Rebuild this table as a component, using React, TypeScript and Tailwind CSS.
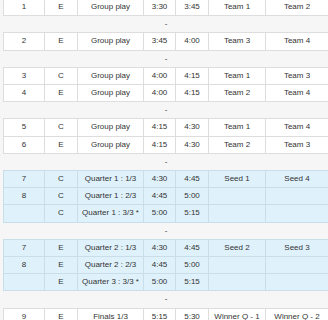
import React from "react";

type Game = {
  num: string;
  field: string;
  label: string;
  start: string;
  end: string;
  home: string;
  away: string;
  bracket?: boolean;
};

// null = spacer row between time slots
const schedule: (Game[] | null)[] = [
  [{ num: "1", field: "E", label: "Group play", start: "3:30", end: "3:45", home: "Team 1", away: "Team 2" }],
  null,
  [{ num: "2", field: "E", label: "Group play", start: "3:45", end: "4:00", home: "Team 3", away: "Team 4" }],
  null,
  [
    { num: "3", field: "C", label: "Group play", start: "4:00", end: "4:15", home: "Team 1", away: "Team 3" },
    { num: "4", field: "E", label: "Group play", start: "4:00", end: "4:15", home: "Team 2", away: "Team 4" },
  ],
  null,
  [
    { num: "5", field: "C", label: "Group play", start: "4:15", end: "4:30", home: "Team 1", away: "Team 4" },
    { num: "6", field: "E", label: "Group play", start: "4:15", end: "4:30", home: "Team 2", away: "Team 3" },
  ],
  null,
  [
    { num: "7", field: "C", label: "Quarter 1 : 1/3", start: "4:30", end: "4:45", home: "Seed 1", away: "Seed 4", bracket: true },
    { num: "8", field: "C", label: "Quarter 1 : 2/3", start: "4:45", end: "5:00", home: "", away: "", bracket: true },
    { num: "", field: "C", label: "Quarter 1 : 3/3 *", start: "5:00", end: "5:15", home: "", away: "", bracket: true },
  ],
  null,
  [
    { num: "7", field: "E", label: "Quarter 2 : 1/3", start: "4:30", end: "4:45", home: "Seed 2", away: "Seed 3", bracket: true },
    { num: "8", field: "E", label: "Quarter 2 : 2/3", start: "4:45", end: "5:00", home: "", away: "", bracket: true },
    { num: "", field: "E", label: "Quarter 3 : 3/3 *", start: "5:00", end: "5:15", home: "", away: "", bracket: true },
  ],
  null,
  [{ num: "9", field: "E", label: "Finals 1/3", start: "5:15", end: "5:30", home: "Winner Q - 1", away: "Winner Q - 2" }],
];

function GameRow({ game }: { game: Game }) {
  const cell = game.bracket
    ? "border border-[#cadeea] bg-[#dff1fb] px-0 py-0 text-center leading-[16.2px] whitespace-nowrap"
    : "border border-[#dddddd] bg-white px-0 py-0 text-center leading-[16.2px] whitespace-nowrap";
  return (
    <tr>
      <td className={cell}>{game.num}</td>
      <td className={cell}>{game.field}</td>
      <td className={cell}>{game.label}</td>
      <td className={cell}>{game.start}</td>
      <td className={cell}>{game.end}</td>
      <td className={cell}>{game.home}</td>
      <td className={cell}>{game.away}</td>
    </tr>
  );
}

function SpacerRow() {
  return (
    <tr>
      <td colSpan={7} className="px-0 py-0 text-center leading-[16.2px]">
        -
      </td>
    </tr>
  );
}

export default function App() {
  return (
    <div className="h-[320px] w-[328px] overflow-hidden bg-[#f6f6f6] pl-[3px] font-['Liberation_Sans',Arial,sans-serif] text-[8px] text-[#333333]">
      <table className="-mt-[2px] w-[325px] table-fixed border-collapse">
        <colgroup>
          <col className="w-[41px]" />
          <col className="w-[33px]" />
          <col className="w-[66px]" />
          <col className="w-[32px]" />
          <col className="w-[33px]" />
          <col className="w-[57px]" />
          <col className="w-[63px]" />
        </colgroup>
        <tbody>
          {schedule.map((slot, i) =>
            slot === null ? (
              <SpacerRow key={i} />
            ) : (
              slot.map((g, j) => <GameRow key={`${i}-${j}`} game={g} />)
            ),
          )}
        </tbody>
      </table>
    </div>
  );
}
